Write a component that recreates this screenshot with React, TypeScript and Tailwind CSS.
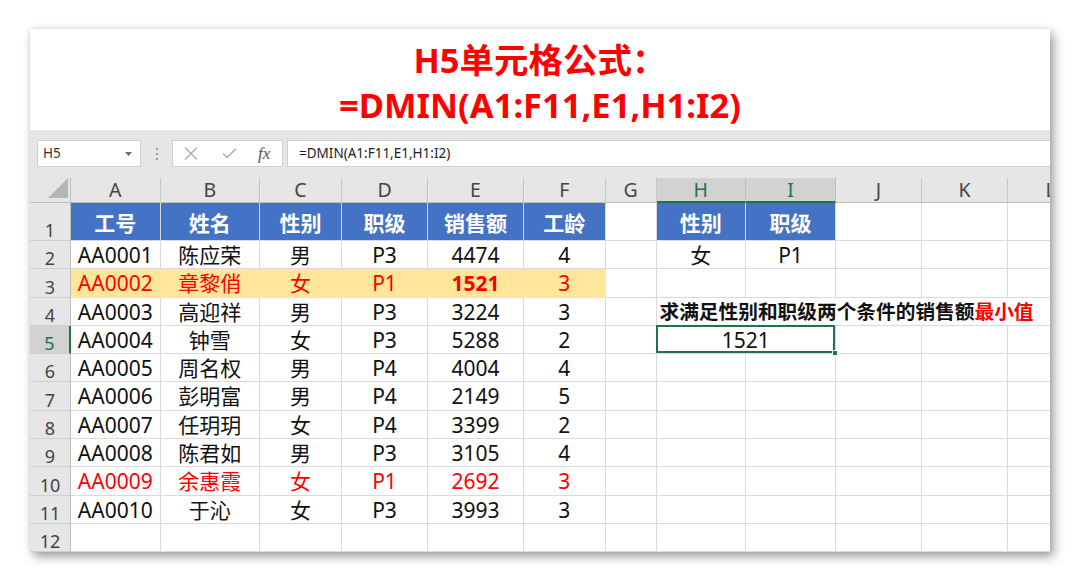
import React from "react";

const FONT = { fontFamily: '"Noto Sans", "Noto Sans CJK SC", sans-serif' };

const LETTERS = ["A", "B", "C", "D", "E", "F", "G", "H", "I", "J", "K", "L"];

const DATA = [
  ["AA0001", "陈应荣", "男", "P3", "4474", "4"],
  ["AA0002", "章黎俏", "女", "P1", "1521", "3"],
  ["AA0003", "高迎祥", "男", "P3", "3224", "3"],
  ["AA0004", "钟雪", "女", "P3", "5288", "2"],
  ["AA0005", "周名权", "男", "P4", "4004", "4"],
  ["AA0006", "彭明富", "男", "P4", "2149", "5"],
  ["AA0007", "任玥玥", "女", "P4", "3399", "2"],
  ["AA0008", "陈君如", "男", "P3", "3105", "4"],
  ["AA0009", "余惠霞", "女", "P1", "2692", "3"],
  ["AA0010", "于沁", "女", "P3", "3993", "3"],
];

const cellCls = "flex items-center justify-center whitespace-nowrap border-r border-b border-[#dadada] text-[21px] text-[#111]";

function RowHead({ n, active }: { n: number; active?: boolean }) {
  return (
    <div
      className={`flex items-end justify-center pb-[1px] leading-none text-[18px] border-b border-[#cfcfcf] ${
        active ? "bg-[#d2d2d2] text-[#217346] border-r-2 border-r-[#217346]" : "bg-[#e6e6e6] text-[#444] border-r border-r-[#bdbdbd]"
      }`}
    >
      {n}
    </div>
  );
}

function Toolbar() {
  return (
    <div className="h-[48px] bg-[#e6e6e6] flex pt-[10px] pl-[7px] shrink-0">
      <div className="w-[104px] h-[27px] bg-white border border-[#d0d0d0] flex items-center justify-between pl-[5px] pr-[8px] text-[13.5px] text-[#333]">
        <span>H5</span>
        <svg width="7" height="4" viewBox="0 0 7 4"><path d="M0 0h7L3.5 4z" fill="#6b6b6b" /></svg>
      </div>
      <div className="w-[31px] h-[27px] flex flex-col items-center justify-center gap-[3px]">
        <span className="w-[2px] h-[2px] bg-[#9a9a9a]" />
        <span className="w-[2px] h-[2px] bg-[#9a9a9a]" />
        <span className="w-[2px] h-[2px] bg-[#9a9a9a]" />
      </div>
      <div className="w-[111px] h-[27px] bg-white border border-[#d0d0d0] flex items-center pl-[11px]">
        <svg width="14" height="13" viewBox="0 0 14 13">
          <path d="M1 0.5L13 12.5M13 0.5L1 12.5" stroke="#ababab" strokeWidth="1.3" />
        </svg>
        <svg className="ml-[24px]" width="15" height="11" viewBox="0 0 15 11">
          <path d="M1 5.5L5 9.5L14 0.8" stroke="#ababab" strokeWidth="1.4" fill="none" />
        </svg>
        <span className="ml-[21px] italic text-[17px] text-[#555] leading-none" style={{ fontFamily: '"Liberation Serif", serif' }}>
          fx
        </span>
      </div>
      <div className="ml-[4px] flex-1 h-[27px] bg-white border-t border-l border-b border-[#d0d0d0] flex items-center pl-[11px] text-[13.5px] text-[#222]">
        =DMIN(A1:F11,E1,H1:I2)
      </div>
    </div>
  );
}

export default function App() {
  const blue = "bg-[#4472c4] border-[#4472c4] text-white font-bold";
  return (
    <div className="w-[1080px] h-[581px] bg-white pt-[29px] pl-[30px] overflow-hidden" style={FONT}>
      <div className="w-[1020px] h-[523px] bg-white overflow-hidden flex flex-col shadow-[4px_5px_10px_rgba(0,0,0,0.35),0_0_6px_rgba(0,0,0,0.12)]">
        {/* title */}
        <div className="h-[101px] shrink-0 flex flex-col items-center pt-[8px] text-[#ff0000] font-bold text-[34.5px] leading-[45px]">
          <div>H5单元格公式：</div>
          <div>=DMIN(A1:F11,E1,H1:I2)</div>
        </div>

        <Toolbar />

        {/* sheet */}
        <div className="grid w-max grid-cols-[41px_89.5px_99.5px_82px_86px_96px_81.5px_51px_89.5px_90px_86px_86px_86px] grid-rows-[25px_38px_repeat(10,28.3px)_28px]">
          {/* column headers */}
          <div className="bg-[#e6e6e6] border-r border-b border-[#bdbdbd] flex items-end justify-end pr-[2px] pb-[4px]">
            <svg width="20" height="20" viewBox="0 0 20 20"><path d="M20 0V20H0z" fill="#b5b5b5" /></svg>
          </div>
          {LETTERS.map((l) => {
            const sel = l === "H" || l === "I";
            return (
              <div
                key={l}
                className={`flex items-center justify-center text-[19.5px] leading-none border-r ${
                  sel
                    ? "bg-[#d2d2d2] text-[#217346] border-r-[#bdbdbd] border-b-2 border-b-[#217346]"
                    : "bg-[#e6e6e6] text-[#444] border-r-[#c6c6c6] border-b border-b-[#bdbdbd]"
                }`}
              >
                {l}
              </div>
            );
          })}

          {/* row 1 */}
          <RowHead n={1} />
          {["工号", "姓名", "性别", "职级", "销售额", "工龄"].map((h) => (
            <div key={h} className={`${cellCls} ${blue} pt-[5px]`}>{h}</div>
          ))}
          <div className={cellCls} />
          <div className={`${cellCls} ${blue} pt-[5px]`}>性别</div>
          <div className={`${cellCls} ${blue} pt-[5px]`}>职级</div>
          <div className={cellCls} />
          <div className={cellCls} />
          <div className={cellCls} />

          {DATA.map((r, i) => {
            const rowNo = i + 2;
            const hi = rowNo === 3;
            const red = rowNo === 3 || rowNo === 10;
            return (
              <React.Fragment key={rowNo}>
                <RowHead n={rowNo} active={rowNo === 5} />
                {r.map((v, j) => (
                  <div
                    key={j}
                    className={`${cellCls} pt-[2px] ${hi ? "bg-[#ffe699] border-[#ffe699]" : ""} ${red ? "text-[#ff0000]" : ""} ${
                      hi && j === 4 ? "font-bold" : ""
                    }`}
                  >
                    {v}
                  </div>
                ))}
                <div className={cellCls} />
                {rowNo === 2 && (
                  <>
                    <div className={`${cellCls} pt-[2px]`}>女</div>
                    <div className={`${cellCls} pt-[2px]`}>P1</div>
                    <div className={cellCls} />
                    <div className={cellCls} />
                    <div className={cellCls} />
                  </>
                )}
                {rowNo === 4 && (
                  <div className="col-span-5 flex items-center whitespace-nowrap border-b border-[#dadada] pl-[3px] pt-[2px] text-[19.7px] font-bold text-[#111]">
                    求满足性别和职级两个条件的销售额<span className="text-[#ff0000]">最小值</span>
                  </div>
                )}
                {rowNo === 5 && (
                  <>
                    <div className={`${cellCls} pt-[2px] col-span-2 relative`}>
                      1521
                      <div className="absolute -left-[1px] -top-[1px] right-0 bottom-0 border-2 border-[#217346]" />
                      <div className="absolute -right-[3px] -bottom-[3px] w-[6px] h-[6px] bg-[#217346] border border-white" />
                    </div>
                    <div className={cellCls} />
                    <div className={cellCls} />
                    <div className={cellCls} />
                  </>
                )}
                {rowNo !== 2 && rowNo !== 4 && rowNo !== 5 && (
                  <>
                    <div className={cellCls} />
                    <div className={cellCls} />
                    <div className={cellCls} />
                    <div className={cellCls} />
                    <div className={cellCls} />
                  </>
                )}
              </React.Fragment>
            );
          })}

          {/* row 12 */}
          <RowHead n={12} />
          {LETTERS.map((l) => (
            <div key={l} className={cellCls} />
          ))}
        </div>
      </div>
    </div>
  );
}
